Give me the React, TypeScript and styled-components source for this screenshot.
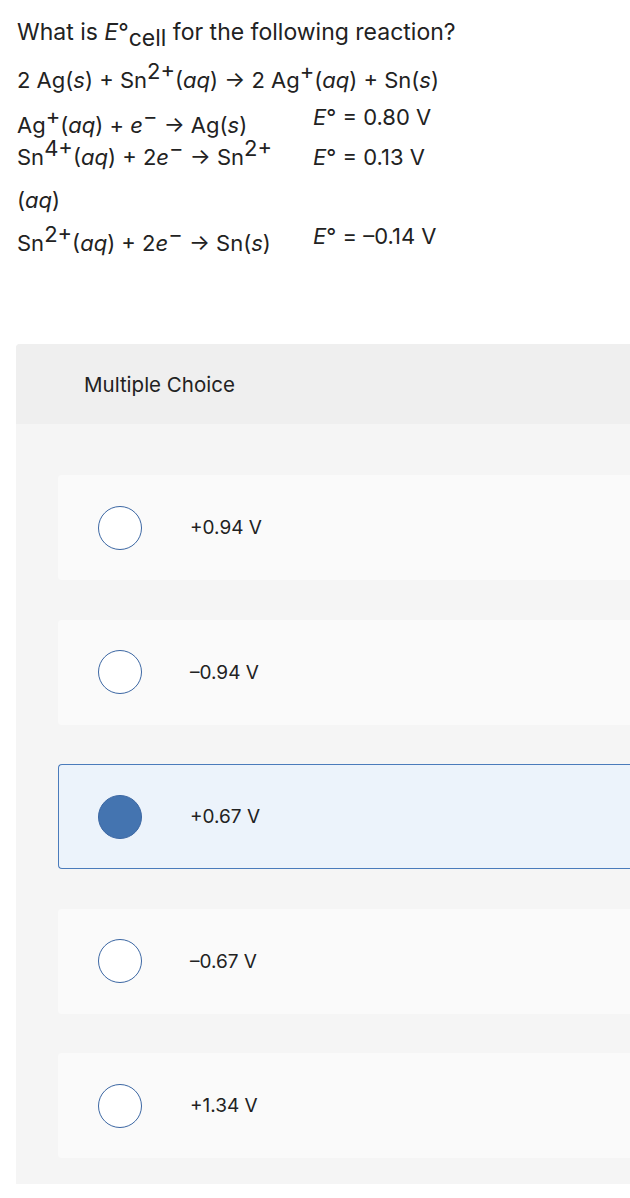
import * as React from 'react';
import styled, { createGlobalStyle } from 'styled-components';

const GlobalStyle = createGlobalStyle`
  html, body {
    margin: 0;
    padding: 0;
    background: #ffffff;
    overflow-x: hidden;
  }
  body {
    font-family: Inter, "Liberation Sans", Arial, sans-serif;
    color: #222222;
  }
`;

const Page = styled.div`
  padding: 16px 0 14px 0;
`;

const Question = styled.div`
  padding-left: 17px;
  font-size: 22px;
`;

const Title = styled.div`
  line-height: 32px;
  font-size: 23px;
`;

const Equation = styled.div`
  line-height: 32px;
  margin-top: 16px;
  white-space: nowrap;
`;

const Sup = styled.sup`
  font-size: 1em;
  position: relative;
  top: -0.42em;
  vertical-align: baseline;
  line-height: 0;
`;

const Sub = styled.sub`
  font-size: 1em;
  position: relative;
  top: 0.28em;
  vertical-align: baseline;
  line-height: 0;
`;

const HalfTable = styled.div`
  margin-top: 13px;
`;

const HalfRow = styled.div<{ $lh: number; $shift: number }>`
  display: grid;
  grid-template-columns: 296px auto;
  align-items: start;
  line-height: ${p => p.$lh}px;
  margin-top: ${p => p.$shift}px;
`;

const Potential = styled.div<{ $lift: number }>`
  margin-top: ${p => -p.$lift}px;
  white-space: nowrap;
`;

const Panel = styled.div`
  margin: 79px -40px 0 16px;
  background: #f5f5f5;
  border-radius: 4px 4px 0 0;
`;

const PanelHeader = styled.div`
  height: 80px;
  display: flex;
  align-items: center;
  padding-left: 68px;
  background: #efefef;
  border-radius: 4px 4px 0 0;
  font-size: 20.5px;
  color: #222222;
`;

const ChoiceList = styled.div`
  display: flex;
  flex-direction: column;
  gap: 39.5px;
  padding: 51px 0 26px 42px;
`;

const Choice = styled.div<{ $selected?: boolean }>`
  height: 105px;
  box-sizing: border-box;
  display: flex;
  align-items: center;
  padding-left: 40px;
  gap: 48px;
  border-radius: 4px;
  background: ${p => (p.$selected ? '#ecf3fb' : '#fafafa')};
  border: 1px solid ${p => (p.$selected ? '#4a7bbb' : '#fafafa')};
  border-right: none;
  font-size: 19px;
`;

const Radio = styled.span<{ $selected?: boolean }>`
  width: 44px;
  height: 44px;
  box-sizing: border-box;
  border-radius: 50%;
  margin-left: -1px;
  flex-shrink: 0;
  border: 1.5px solid #3c67a3;
  background: ${p => (p.$selected ? '#4474b0' : '#ffffff')};
`;

const choices = ['+0.94 V', '\u20130.94 V', '+0.67 V', '\u20130.67 V', '+1.34 V'];
const selectedIndex = 2;

const E = () => (
  <>
    <i>E</i>°
  </>
);

const App: React.FC = () => (
  <Page>
    <GlobalStyle />
    <Question>
      <Title>
        What is <E />
        <Sub>cell</Sub> for the following reaction?
      </Title>
      <Equation>
        2 Ag(<i>s</i>) + Sn<Sup>2+</Sup>(<i>aq</i>) → 2 Ag<Sup>+</Sup>(<i>aq</i>) + Sn(<i>s</i>)
      </Equation>
      <HalfTable>
        <HalfRow $lh={32} $shift={0}>
          <div>
            Ag<Sup>+</Sup>(<i>aq</i>) + <i>e</i>
            <Sup>−</Sup> → Ag(<i>s</i>)
          </div>
          <Potential $lift={8}>
            <E /> = 0.80 V
          </Potential>
        </HalfRow>
        <HalfRow $lh={43} $shift={-5}>
          <div>
            Sn<Sup>4+</Sup>(<i>aq</i>) + 2<i>e</i>
            <Sup>−</Sup> → Sn<Sup>2+</Sup>
            <br />
            (<i>aq</i>)
          </div>
          <Potential $lift={0}>
            <E /> = 0.13 V
          </Potential>
        </HalfRow>
        <HalfRow $lh={43} $shift={0}>
          <div>
            Sn<Sup>2+</Sup>(<i>aq</i>) + 2<i>e</i>
            <Sup>−</Sup> → Sn(<i>s</i>)
          </div>
          <Potential $lift={7}>
            <E /> = –0.14 V
          </Potential>
        </HalfRow>
      </HalfTable>
    </Question>

    <Panel>
      <PanelHeader>Multiple Choice</PanelHeader>
      <ChoiceList>
        {choices.map((label, i) => (
          <Choice key={label} $selected={i === selectedIndex}>
            <Radio $selected={i === selectedIndex} />
            <span>{label}</span>
          </Choice>
        ))}
      </ChoiceList>
    </Panel>
  </Page>
);

export default App;
